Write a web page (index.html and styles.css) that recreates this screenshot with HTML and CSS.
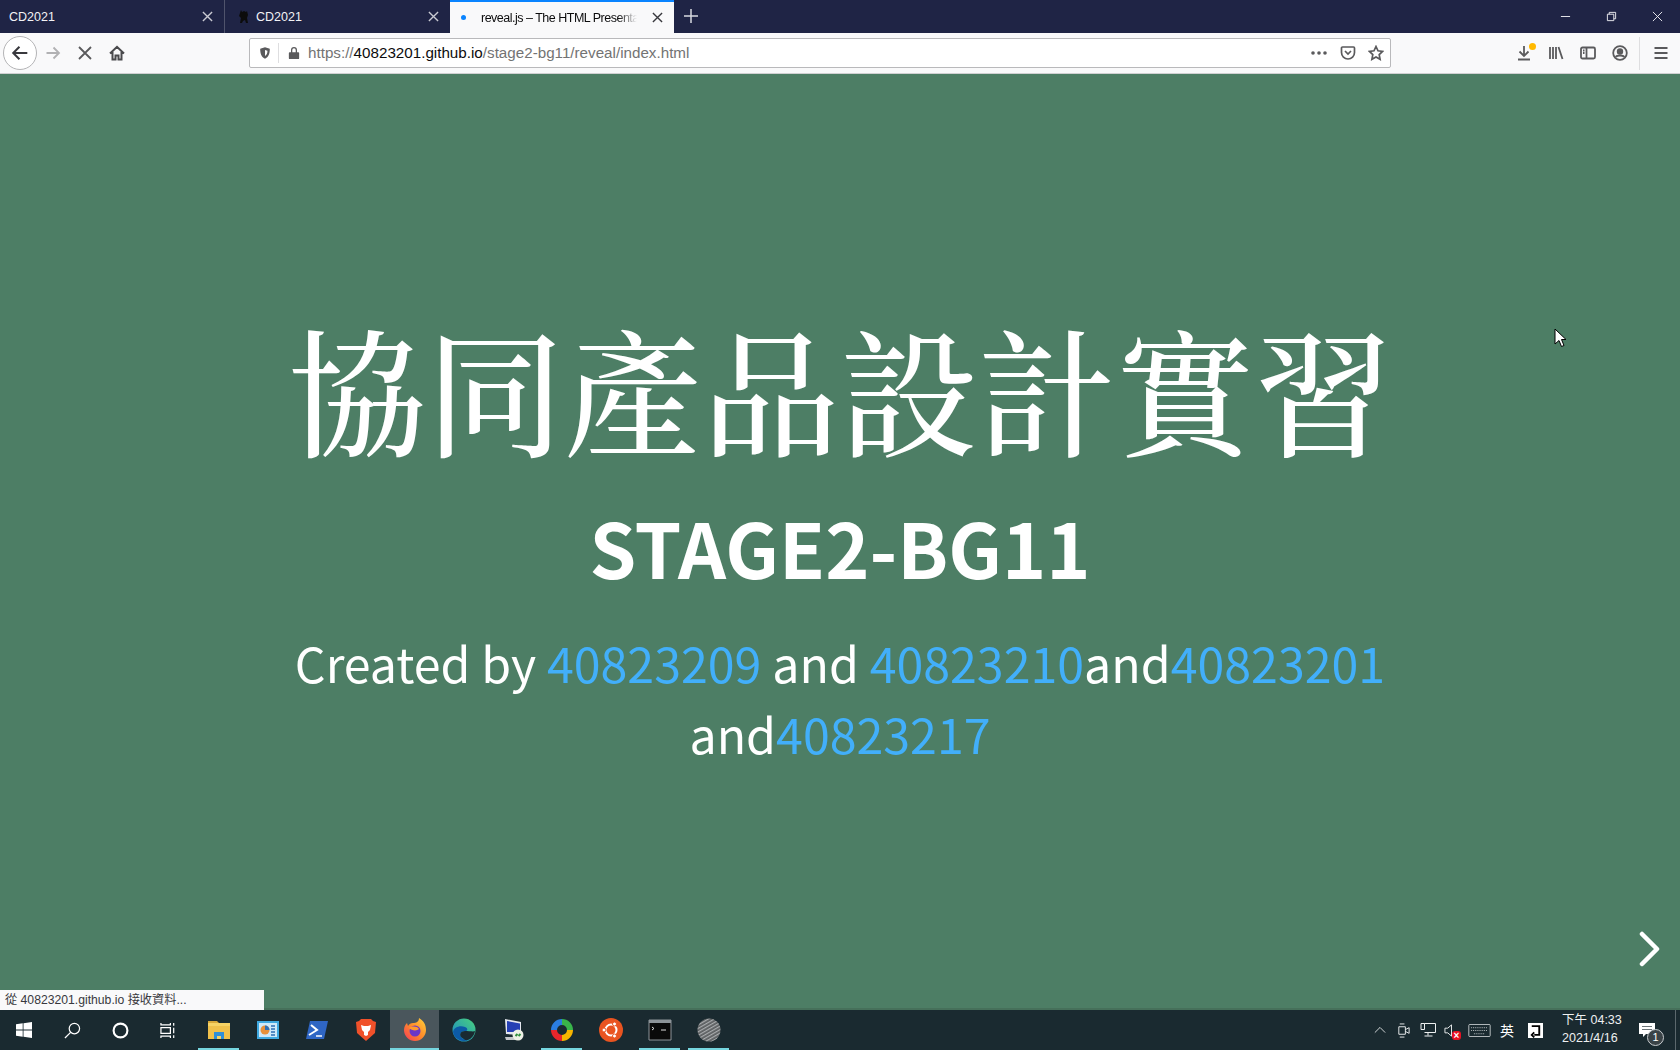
FILE: index.html
```html
<!DOCTYPE html>
<html lang="zh-Hant">
<head>
  <meta charset="UTF-8" />
  <title>reveal.js – The HTML Presentation Framework</title>
  <link rel="stylesheet" href="styles.css">
</head>
<body>

  <!-- tab strip -->
  <div class="tabbar">
    <div class="tab">
      <span class="tab-title">CD2021</span>
      <svg class="tab-close" viewBox="0 0 12 12"><path d="M1 1l10 10M11 1L1 11"/></svg>
    </div>
    <div class="tab tab-sep">
      <svg class="tab-favicon" viewBox="0 0 16 16"><path d="M5 1l1 2 2-1 2 1 1-1 1 4-1 3 1 5h-2l-1-3-2 1-1 2H4l1-5-2-2 1-3z" fill="#0c0c0c"/></svg>
      <span class="tab-title">CD2021</span>
      <svg class="tab-close" viewBox="0 0 12 12"><path d="M1 1l10 10M11 1L1 11"/></svg>
    </div>
    <div class="tab tab-active">
      <span class="tab-dot"></span>
      <span class="tab-title tab-fade">reveal.js – The HTML Presenta</span>
      <svg class="tab-close" viewBox="0 0 12 12"><path d="M1 1l10 10M11 1L1 11"/></svg>
    </div>
    <svg class="tab-new" viewBox="0 0 14 14"><path d="M7 0v14M0 7h14"/></svg>
    <div class="window-controls">
      <svg viewBox="0 0 12 12"><path d="M1 6h10"/></svg>
      <svg viewBox="0 0 12 12"><path d="M1.500 3.500h7v7h-7zM3.500 3.500v-2h7v7h-2"/></svg>
      <svg viewBox="0 0 12 12"><path d="M1 1l10 10M11 1L1 11"/></svg>
    </div>
  </div>

  <!-- toolbar -->
  <div class="navbar">
    <div class="back-btn">
      <svg class="icon" viewBox="0 0 16 16"><path d="M14.500 8H2M7.500 2.500L2 8l5.500 5.500"/></svg>
    </div>
    <svg class="icon forward" viewBox="0 0 16 16"><path d="M1.500 8H14M8.500 2.500L14 8l-5.500 5.500"/></svg>
    <svg class="icon stop" viewBox="0 0 16 16"><path d="M2 2l12 12M14 2L2 14"/></svg>
    <svg class="icon home" viewBox="0 0 16 16"><path d="M1 8.500L8 1.800l7 6.700M3.500 7v7.500h3v-4h3v4h3V7"/></svg>

    <div class="urlbar">
      <svg class="url-shield" viewBox="0 0 16 16"><path d="M8 1.500l5.500 1.500c0 6-1.500 9.500-5.500 11.500C4 12.500 2.500 9 2.500 3zM8 4.500l2.800.8c0 3-.8 4.800-2.800 6z"/></svg>
      <span class="url-divider"></span>
      <svg class="url-lock" viewBox="0 0 14 16"><path d="M2 7h10a1 1 0 0 1 1 1v6a1 1 0 0 1-1 1H2a1 1 0 0 1-1-1V8a1 1 0 0 1 1-1zM3.500 7V4.500a3.500 3.500 0 0 1 7 0V7H9V4.500a2 2 0 0 0-4 0V7z"/></svg>
      <span class="url-text">https://<b>40823201.github.io</b>/stage2-bg11/reveal/index.html</span>
      <svg class="url-dots" viewBox="0 0 16 4"><circle cx="2" cy="2" r="1.800"/><circle cx="8" cy="2" r="1.800"/><circle cx="14" cy="2" r="1.800"/></svg>
      <svg class="icon url-action" viewBox="0 0 16 16"><path d="M2.500 2h11a1 1 0 0 1 1 1v4.500a6.500 6.500 0 0 1-13 0V3a1 1 0 0 1 1-1zM5 6l3 3 3-3"/></svg>
      <svg class="icon url-action" viewBox="0 0 16 16"><path d="M8 1.500l2 4.300 4.600.6-3.400 3.200.9 4.700L8 12l-4.100 2.300.9-4.700L1.400 6.400 6 5.800z"/></svg>
    </div>

    <div class="nav-right">
      <div class="download">
        <svg class="icon" viewBox="0 0 16 16"><path d="M8 1v9.500M3.500 6.500L8 11l4.500-4.500M2 14.500h12"/></svg>
        <span class="download-dot"></span>
      </div>
      <svg class="icon" viewBox="0 0 16 16"><path d="M2 2v12M5 2v12M8 2v12M10.500 2l4 12"/></svg>
      <svg class="icon" viewBox="0 0 16 16"><path d="M2.500 2.500h11a1.500 1.500 0 0 1 1.500 1.500v8a1.500 1.500 0 0 1-1.500 1.500h-11A1.500 1.500 0 0 1 1 12V4a1.500 1.500 0 0 1 1.500-1.500zM6.500 2.500v11M3 5.500h1.500M3 8h1.500"/></svg>
      <svg class="icon" viewBox="0 0 16 16"><circle cx="8" cy="8" r="6.800"/><circle cx="8" cy="6.500" r="2.300" fill="#5a5a5c"/><path d="M3.800 12c1-2 7.400-2 8.400 0" stroke-width="2.200"/></svg>
      <span class="nav-divider"></span>
      <svg class="icon" viewBox="0 0 16 16"><path d="M1.500 3h13M1.500 8h13M1.500 13h13"/></svg>
    </div>
  </div>

  <!-- slide -->
  <main class="slide">
    <h1>協同產品設計實習</h1>
    <h2>STAGE2-BG11</h2>
    <p>Created by <a href="#">40823209</a> and <a href="#">40823210</a>and<a href="#">40823201</a> and<a href="#">40823217</a></p>
    <svg class="next-arrow" viewBox="0 0 24 36"><path d="M4 3l15 15L4 33"/></svg>
    <svg class="cursor" viewBox="0 0 12 20"><path d="M1 1v15l4-3.500 2.500 6 2.500-1-2.500-6H12z"/></svg>
  </main>
  <div class="slide-edge"></div>

  <div class="status">從 40823201.github.io 接收資料...</div>

  <!-- windows taskbar -->
  <div class="taskbar">
    <div class="task-item">
      <svg class="win-icon" viewBox="0 0 16 16"><path d="M0 2.300l6.700-1v6.300H0zM7.500 1.200L16 0v7.600H7.500zM0 8.400h6.700v6.300l-6.700-1zM7.500 8.400H16V16l-8.500-1.200z"/></svg>
    </div>
    <div class="task-item">
      <svg class="line-icon" viewBox="0 0 18 18"><circle cx="11" cy="7" r="5.500"/><path d="M7 11l-6 6"/></svg>
    </div>
    <div class="task-item">
      <svg class="line-icon cortana" viewBox="0 0 16 16"><circle cx="8" cy="8" r="6.500"/></svg>
    </div>
    <div class="task-item">
      <svg class="line-icon" viewBox="0 0 18 18"><path d="M1 1v2h10V1M1 17v-2h10v2M1 6h10v6H1zM14.500 1v3M14.500 6v6M14.500 14v3"/></svg>
    </div>
    <div class="task-item is-open">
      <svg class="app-icon" viewBox="0 0 24 24"><path d="M1 3h9l2 2H1z" fill="#d9a93a"/><path d="M1 5h22v16H1z" fill="#f6d365"/><path d="M1 8h22v13H1z" fill="#f0c14b"/><path d="M7 14h10v7H7z" fill="#2f8fd8"/><path d="M10 18h4v3h-4z" fill="#f6d365"/></svg>
    </div>
    <div class="task-item">
      <svg class="app-icon" viewBox="0 0 24 24"><path d="M1 3h22v18H1z" fill="#3fa9e0"/><path d="M3 5h18v14H3z" fill="#cfeafa"/><circle cx="9" cy="12" r="4.500" fill="#e8913a"/><path d="M9 12V7.500a4.500 4.500 0 0 1 4.500 4.500z" fill="#2e6fb5"/><path d="M15 8h4M15 11h4M15 14h4M15 17h4" stroke="#2e6fb5" stroke-width="1.500"/></svg>
    </div>
    <div class="task-item">
      <svg class="app-icon" viewBox="0 0 24 24"><path d="M5 3h18l-4 18H1z" fill="#2f66c4"/><path d="M6 7l6 5-8 5" fill="none" stroke="#fff" stroke-width="2"/><path d="M11 18h6" stroke="#fff" stroke-width="1.500"/></svg>
    </div>
    <div class="task-item">
      <svg class="app-icon" viewBox="0 0 24 24"><path d="M7 1h10l2 2 3 1-1 11-9 8-9-8L2 4l3-1z" fill="#f0512a"/><path d="M7 7l3 1h4l3-1-1 5-2 2v3l-2 1-2-1v-3l-2-2z" fill="#fff"/></svg>
    </div>
    <div class="task-item is-open is-active">
      <svg class="app-icon" viewBox="0 0 24 24"><defs><linearGradient id="fox" x1="1" y1="0" x2="0" y2="1"><stop offset="0" stop-color="#ffd43a"/><stop offset=".5" stop-color="#ff8a2a"/><stop offset="1" stop-color="#f5365c"/></linearGradient></defs><path d="M16 0c5 3 7 7 7 12a11 11 0 0 1-22 0c0-3 1-5 3-7l1 3c1-2 3-3 5-3 3 0 6-1 6-5z" fill="url(#fox)"/><circle cx="12" cy="13" r="5.500" fill="#6b36c8"/><path d="M6 10c3-2 8-2 10 1-2 2-7 2-10-1z" fill="#ff9a2e"/></svg>
    </div>
    <div class="task-item">
      <svg class="app-icon" viewBox="0 0 24 24"><defs><linearGradient id="edge-top" x1="0" y1="1" x2="1" y2="0"><stop offset="0" stop-color="#1a86c8"/><stop offset="1" stop-color="#49d17d"/></linearGradient></defs><circle cx="12" cy="12" r="11.500" fill="url(#edge-top)"/><path d="M1 14C2 9 8 7 13 9c3 1 3 4 0 4-4 0-6 3-4 6 1 2 4 3 7 3-7 3-14-2-15-8z" fill="#0c5aa6"/><path d="M9 19c-2-3 0-6 4-6 4 0 9 1 10 0-1 6-6 10-10 9-1-1-3-2-4-3z" fill="#1a2a30"/></svg>
    </div>
    <div class="task-item">
      <svg class="app-icon" viewBox="0 0 24 24"><path d="M4 1l16 3v13L5 16z" fill="#e4e7ee"/><path d="M6 3l13 2.500V14L6 14z" fill="#2540b5"/><path d="M4 19h14v3H5z" fill="#c4c7ca"/><circle cx="17" cy="17" r="5.500" fill="#eef1e6"/><path d="M14.500 18l2-2M17.500 18l2-2" stroke="#2f8f3d" stroke-width="2"/></svg>
    </div>
    <div class="task-item is-open">
      <svg class="app-icon ring-icon" viewBox="0 0 24 24"><path d="M4 12A8 8 0 0 1 12 4" stroke="#2a7de1"/><path d="M12 4A8 8 0 0 1 20 12" stroke="#39b54a"/><path d="M20 12A8 8 0 0 1 12 20" stroke="#f7b500"/><path d="M12 20A8 8 0 0 1 4 12" stroke="#e8262b"/></svg>
    </div>
    <div class="task-item">
      <svg class="app-icon" viewBox="0 0 24 24"><circle cx="12" cy="12" r="12" fill="#e95420"/><circle cx="12" cy="12" r="5.500" fill="none" stroke="#fff" stroke-width="2"/><circle cx="5" cy="12" r="2" fill="#fff" stroke="#e95420"/><circle cx="15.500" cy="6" r="2" fill="#fff" stroke="#e95420"/><circle cx="15.500" cy="18" r="2" fill="#fff" stroke="#e95420"/></svg>
    </div>
    <div class="task-item is-open">
      <svg class="app-icon" viewBox="0 0 24 24"><path d="M1 2h22v20H1z" fill="#0a0a0a" stroke="#8d9499"/><path d="M1 2h22v3H1z" fill="#8d9499"/><path d="M4 9l2 1.500L4 12M13 12h5" fill="none" stroke="#ddd"/></svg>
    </div>
    <div class="task-item is-open">
      <svg class="app-icon" viewBox="0 0 24 24"><defs><pattern id="ball-lines" width="3" height="3" patternUnits="userSpaceOnUse" patternTransform="rotate(-30)"><rect width="3" height="3" fill="#5b5e60"/><rect width="3" height="1.200" fill="#a9acae"/></pattern></defs><circle cx="12" cy="12" r="11.500" fill="url(#ball-lines)"/></svg>
    </div>

    <div class="tray">
      <svg class="tray-icon chevron" viewBox="0 0 14 8"><path d="M1 7l6-6 6 6"/></svg>
      <svg class="tray-icon meet" viewBox="0 0 16 16"><path d="M4 1h5M4 15h5M3 4h7v8H3zM10 7l4-2v6l-4-2"/></svg>
      <svg class="tray-icon net" viewBox="0 0 16 16"><path d="M4.500 1.500h11v9h-11M1 1.500h3.500v6H1zM8 10.500v3M4.500 14h8"/></svg>
      <div class="volume">
        <svg class="tray-icon" viewBox="0 0 16 16"><path d="M1 5.500h3L8 2v12L4 10.500H1z"/></svg>
        <span class="mute-badge">×</span>
      </div>
      <svg class="tray-keyboard" viewBox="0 0 24 14"><rect x=".5" y=".5" width="23" height="13" rx="1"/><path d="M3 4h18M3 7h18M6 10.500h12" stroke-dasharray="1 1"/></svg>
      <span class="tray-lang">英</span>
      <span class="ime-box">
        <svg viewBox="0 0 12 12"><path d="M3 2.500h6v7H5M5 7.500L3 9.500l2 2"/></svg>
      </span>
      <div class="clock">
        <span>下午 04:33</span>
        <span>2021/4/16</span>
      </div>
      <div class="notify">
        <svg viewBox="0 0 16 16"><path d="M0 1h16v11H7l-3 3v-3H0z"/><path d="M3 4.500h10M3 7.500h10" stroke="#6b7478"/></svg>
        <span class="notify-count">1</span>
      </div>
      <span class="show-desktop"></span>
    </div>
  </div>

</body>
</html>
```

FILE: styles.css
```css
html, body {
  margin: 0;
  height: 100%;
}

body {
  position: relative;
  width: 1680px;
  height: 1050px;
  overflow: hidden;
  display: flex;
  flex-direction: column;
  font-family: "Liberation Sans", "Noto Sans CJK TC", sans-serif;
  background: #4d7e65;
}

svg {
  display: block;
  flex: none;
}

/* tab strip */
.tabbar {
  height: 33px;
  flex: none;
  display: flex;
  align-items: stretch;
  background: #1f2445;
  color: #f2f2f5;
  font-size: 12.500px;
}

.tab {
  width: 224px;
  box-sizing: border-box;
  display: flex;
  align-items: center;
  padding: 0 11px 0 9px;
}

.tab-sep {
  border-left: 1px solid #50546c;
  width: 226px;
  gap: 4px;
}

.tab-active {
  width: 224px;
  background: #f9f9fa;
  color: #0c0c0d;
  border-top: 2px solid #0a84ff;
  padding-left: 10px;
  gap: 15px;
}

.tab-title {
  flex: 1;
  min-width: 0;
  white-space: nowrap;
}

.tab-fade {
  letter-spacing: -.5px;
  -webkit-mask-image: linear-gradient(to right, #000 88%, transparent);
  mask-image: linear-gradient(to right, #000 88%, transparent);
}

.tab-favicon {
  width: 16px;
  height: 16px;
  margin-left: 2px;
}

.tab-dot {
  width: 5px;
  height: 5px;
  border-radius: 50%;
  background: #0a84ff;
  margin-left: 1px;
  flex: none;
}

.tab-active .tab-close {
  stroke: #38383d;
  margin-left: 0;
}

.tab-close {
  width: 11px;
  height: 11px;
  margin-left: 8px;
  fill: none;
  stroke: #c9cad2;
  stroke-width: 1.500;
}

.tab-new {
  width: 14px;
  height: 14px;
  margin: 9px 0 0 10px;
  fill: none;
  stroke: #d8d9e0;
  stroke-width: 1.500;
}

.window-controls {
  margin-left: auto;
  display: flex;
  align-items: center;
  gap: 35px;
  padding-right: 17px;
}

.window-controls svg {
  width: 11px;
  height: 11px;
  fill: none;
  stroke: #f2f2f5;
  stroke-width: 1;
}

/* toolbar */
.navbar {
  height: 41px;
  flex: none;
  box-sizing: border-box;
  display: flex;
  align-items: center;
  background: #f9f9fa;
  border-bottom: 1px solid #d0d0d2;
}

.icon {
  width: 16px;
  height: 16px;
  fill: none;
  stroke: #5a5a5c;
  stroke-width: 1.800;
}

.back-btn {
  width: 34px;
  height: 34px;
  margin-left: 3px;
  box-sizing: border-box;
  border: 1px solid #b4b4b6;
  border-radius: 50%;
  background: #fff;
  display: flex;
  align-items: center;
  justify-content: center;
}

.back-btn .icon {
  width: 18px;
  height: 18px;
  stroke: #38383d;
}

.forward {
  margin-left: 8px;
  stroke: #b1b1b3;
}

.stop {
  margin-left: 16px;
}

.home {
  margin-left: 16px;
  stroke: #4a4a4c;
  stroke-width: 2;
}

.urlbar {
  width: 1142px;
  height: 30px;
  margin-left: 124px;
  box-sizing: border-box;
  display: flex;
  align-items: center;
  background: #fff;
  border: 1px solid #b9b9bb;
  border-radius: 2px;
  padding: 0 1px 0 8px;
}

.url-shield {
  width: 14px;
  height: 14px;
  fill: #5a5a5c;
  fill-rule: evenodd;
}

.url-divider {
  width: 1px;
  height: 20px;
  background: #dedee0;
  margin: 0 9px 0 6px;
}

.url-lock {
  width: 12px;
  height: 14px;
  fill: #5a5a5c;
  margin-right: 8px;
}

.url-text {
  flex: 1;
  font-size: 15.200px;
  line-height: 26px;
  padding-bottom: 1px;
  color: #737373;
  white-space: nowrap;
}

.url-text b {
  font-weight: normal;
  color: #0c0c0d;
}

.url-dots {
  width: 16px;
  height: 4px;
  fill: #5a5a5c;
  margin-right: 13px;
}

.url-action {
  margin-right: 12px;
  stroke-width: 1.700;
}

.url-action:last-child {
  margin-right: 5px;
}

.nav-right {
  flex: 1;
  display: flex;
  align-items: center;
  gap: 16px;
  padding-left: 125px;
}

.download {
  position: relative;
}

.download-dot {
  position: absolute;
  top: -2px;
  right: -4px;
  width: 7px;
  height: 7px;
  border-radius: 50%;
  background: #ffb900;
}

.nav-divider {
  width: 1px;
  height: 33px;
  background: #dedee0;
  margin: 0 -3px 0 -5px;
}

/* slide */
.slide {
  position: relative;
  flex: 1;
  min-height: 0;
  display: flex;
  flex-direction: column;
  align-items: center;
  justify-content: center;
  padding-bottom: 12px;
  color: #fff;
  font-family: "Noto Sans CJK TC", sans-serif;
  text-align: center;
}

.slide h1 {
  margin: 0;
  font-size: 138px;
  font-weight: 500;
  line-height: 170px;
  font-family: "Noto Serif CJK TC", "Noto Sans CJK TC", serif;
}

.slide h2 {
  margin: 30px 0 0;
  font-size: 75px;
  font-weight: 700;
  line-height: 92px;
}

.slide p {
  margin: 34px 0 0;
  width: 1120px;
  font-size: 48.300px;
  line-height: 71px;
}

.slide a {
  color: #42affa;
  text-decoration: none;
}

.next-arrow {
  position: absolute;
  right: 18px;
  bottom: 41px;
  width: 24px;
  height: 36px;
  fill: none;
  stroke: #fff;
  stroke-width: 4.500;
  stroke-linecap: round;
  stroke-linejoin: round;
}

.cursor {
  position: absolute;
  left: 1554px;
  top: 254px;
  width: 12px;
  height: 20px;
  fill: #fff;
  stroke: #000;
  stroke-width: 1;
}

.slide-edge {
  height: 2px;
  flex: none;
  background: #46705a;
}

.status {
  position: absolute;
  left: 0;
  bottom: 40px;
  width: 264px;
  height: 20px;
  box-sizing: border-box;
  padding: 1px 5px;
  background: #f9f9fa;
  color: #38383d;
  font-size: 12.200px;
  line-height: 18px;
  white-space: nowrap;
}

/* windows taskbar */
.taskbar {
  height: 40px;
  flex: none;
  display: flex;
  align-items: stretch;
  background: #1a2a30;
  color: #fff;
}

.task-item {
  width: 49px;
  flex: none;
  position: relative;
  display: flex;
  align-items: center;
  justify-content: center;
}

.task-item:nth-child(-n+4) {
  width: 48px;
}

.task-item:nth-child(5) {
  margin-left: 2px;
}

.task-item.is-open::after {
  content: "";
  position: absolute;
  left: 4px;
  right: 4px;
  bottom: 0;
  height: 2px;
  background: #76d6df;
}

.task-item.is-active {
  background: #4a565c;
}

.task-item.is-active::after {
  left: 0;
  right: 0;
}

.win-icon {
  width: 16px;
  height: 16px;
  fill: #fff;
}

.line-icon {
  width: 17px;
  height: 17px;
  fill: none;
  stroke: #fff;
  stroke-width: 1.300;
}

.cortana {
  stroke-width: 2;
}

.app-icon {
  width: 24px;
  height: 24px;
}

.ring-icon {
  fill: none;
  stroke-width: 6;
}

.tray {
  margin-left: auto;
  display: flex;
  align-items: center;
  position: relative;
}

.tray-icon {
  width: 15px;
  height: 15px;
  margin-right: 8px;
  fill: none;
  stroke: #eef0f1;
  stroke-width: 1;
}

.chevron {
  width: 12px;
  height: 8px;
  margin-right: 10px;
}

.meet {
  margin-right: 9px;
}

.net {
  width: 16px;
  height: 16px;
}

.volume {
  position: relative;
  margin-right: 1px;
}

.mute-badge {
  position: absolute;
  right: 6px;
  bottom: -2px;
  width: 9px;
  height: 9px;
  border-radius: 3px;
  background: #e81123;
  font-size: 10px;
  line-height: 9px;
  text-align: center;
  font-weight: bold;
}

.tray-keyboard {
  width: 23px;
  height: 13px;
  margin-right: 9px;
  fill: none;
  stroke: #eef0f1;
  stroke-width: .8;
}

.tray-lang {
  font-size: 14px;
  font-family: "Noto Sans CJK TC", sans-serif;
  margin-right: 14px;
}

.ime-box {
  width: 15px;
  height: 15px;
  background: #fff;
  margin-right: 19px;
}

.ime-box svg {
  fill: none;
  stroke: #000;
  stroke-width: 1.500;
}

.clock {
  width: 60px;
  display: flex;
  flex-direction: column;
  gap: 3px;
  margin-bottom: 2px;
  font-size: 12.500px;
  line-height: 15px;
  color: #eef0f1;
  white-space: nowrap;
}

.notify {
  position: relative;
  width: 16px;
  margin-left: 17px;
}

.notify svg {
  fill: #fff;
}

.notify-count {
  position: absolute;
  left: 8px;
  top: 7px;
  width: 17px;
  height: 17px;
  box-sizing: border-box;
  border: 1px solid #c8cccf;
  border-radius: 50%;
  background: #3a4347;
  font-size: 11px;
  line-height: 15px;
  text-align: center;
}

.show-desktop {
  width: 1px;
  height: 40px;
  background: #5c686d;
  margin: 0 4px 0 20px;
}
```
